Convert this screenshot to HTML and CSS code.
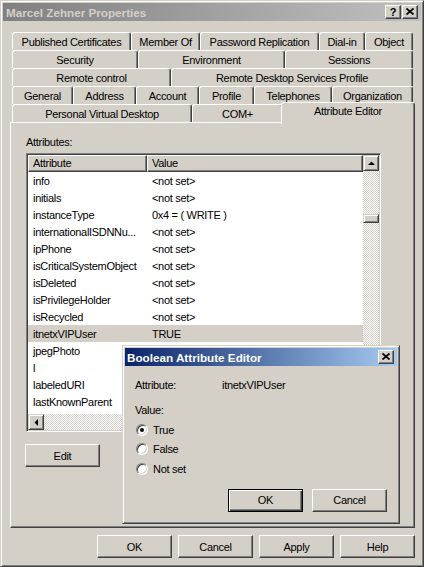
FILE: index.html
```html
<!DOCTYPE html>
<html>
<head>
<meta charset="utf-8">
<link rel="stylesheet" href="styles.css">
</head>
<body>
<div class="window">
  <div class="titlebar">
    <span class="title">Marcel Zehner Properties</span>
    <div class="tbtns">
      <span class="tbtn">?</span>
      <span class="tbtn"><svg width="8" height="7" viewBox="0 0 8 7"><path d="M0.5 0.5L7.5 6.5M7.5 0.5L0.5 6.5" stroke="#000" stroke-width="1.7"/></svg></span>
    </div>
  </div>
  <div class="content">
    <div class="tabs">
      <div class="tabrow r1">
        <div class="tab">Published Certificates</div>
        <div class="tab">Member Of</div>
        <div class="tab">Password Replication</div>
        <div class="tab">Dial-in</div>
        <div class="tab">Object</div>
      </div>
      <div class="tabrow r2">
        <div class="tab">Security</div>
        <div class="tab">Environment</div>
        <div class="tab">Sessions</div>
      </div>
      <div class="tabrow r3">
        <div class="tab">Remote control</div>
        <div class="tab">Remote Desktop Services Profile</div>
      </div>
      <div class="tabrow r4">
        <div class="tab">General</div>
        <div class="tab">Address</div>
        <div class="tab">Account</div>
        <div class="tab">Profile</div>
        <div class="tab">Telephones</div>
        <div class="tab">Organization</div>
      </div>
      <div class="tabrow r5">
        <div class="tab">Personal Virtual Desktop</div>
        <div class="tab">COM+</div>
        <div class="tab sel">Attribute Editor</div>
      </div>
    </div>
    <div class="panel">
      <div class="label">Attributes:</div>
      <div class="listbox">
        <div class="listmain">
          <div class="header">
            <div class="hcell">Attribute</div>
            <div class="hcell">Value</div>
          </div>
          <div class="row"><span>info</span><span>&lt;not set&gt;</span></div>
          <div class="row"><span>initials</span><span>&lt;not set&gt;</span></div>
          <div class="row"><span>instanceType</span><span>0x4 = ( WRITE )</span></div>
          <div class="row"><span>internationalISDNNu...</span><span>&lt;not set&gt;</span></div>
          <div class="row"><span>ipPhone</span><span>&lt;not set&gt;</span></div>
          <div class="row"><span>isCriticalSystemObject</span><span>&lt;not set&gt;</span></div>
          <div class="row"><span>isDeleted</span><span>&lt;not set&gt;</span></div>
          <div class="row"><span>isPrivilegeHolder</span><span>&lt;not set&gt;</span></div>
          <div class="row"><span>isRecycled</span><span>&lt;not set&gt;</span></div>
          <div class="row selected"><span>itnetxVIPUser</span><span>TRUE</span></div>
          <div class="row"><span>jpegPhoto</span><span></span></div>
          <div class="row"><span>l</span><span></span></div>
          <div class="row"><span>labeledURI</span><span></span></div>
          <div class="row"><span>lastKnownParent</span><span></span></div>
          <div class="row"><span>lastLogoff</span><span></span></div>
        </div>
        <div class="vscroll">
          <div class="sbtn"><svg width="7" height="4" viewBox="0 0 7 4"><polygon points="0,4 7,4 3.5,0.5" fill="#000"/></svg></div>
          <div class="thumb"></div>
        </div>
        <div class="hscroll">
          <div class="sbtn"><svg width="4" height="7" viewBox="0 0 4 7"><polygon points="4,0 4,7 0.5,3.5" fill="#000"/></svg></div>
        </div>
        <div class="corner"></div>
      </div>
      <button class="btn edit">Edit</button>
    </div>
    <div class="footer">
      <button class="btn">OK</button>
      <button class="btn">Cancel</button>
      <button class="btn">Apply</button>
      <button class="btn">Help</button>
    </div>
  </div>
</div>

<div class="dialog">
  <div class="dtitle">
    <span class="dtext">Boolean Attribute Editor</span>
    <span class="tbtn"><svg width="8" height="7" viewBox="0 0 8 7"><path d="M0.5 0.5L7.5 6.5M7.5 0.5L0.5 6.5" stroke="#000" stroke-width="1.7"/></svg></span>
  </div>
  <div class="dbody">
    <div class="attrrow"><span class="alabel">Attribute:</span><span>itnetxVIPUser</span></div>
    <div class="vlabel">Value:</div>
    <div class="radios">
      <div class="ropt"><span class="radio on"></span><span>True</span></div>
      <div class="ropt"><span class="radio"></span><span>False</span></div>
      <div class="ropt"><span class="radio"></span><span>Not set</span></div>
    </div>
    <div class="dbtns">
      <button class="btn default">OK</button>
      <button class="btn">Cancel</button>
    </div>
  </div>
</div>
</body>
</html>
```

FILE: styles.css
```css
* { box-sizing: border-box; }
html, body { margin: 0; padding: 0; }
body {
  position: relative;
  width: 424px;
  height: 567px;
  overflow: hidden;
  background: #d4d0c8;
  font-family: "Liberation Sans", Arial, sans-serif;
  font-size: 11px;
  letter-spacing: -0.3px;
  color: #000;
}

.window {
  width: 424px;
  height: 567px;
  background: #d4d0c8;
  border: 1px solid;
  border-color: #d4d0c8 #404040 #404040 #d4d0c8;
  box-shadow: inset 1px 1px #fff, inset -1px -1px #808080;
  padding: 2px;
  display: flex;
  flex-direction: column;
}

.titlebar {
  height: 18px;
  flex: none;
  background: linear-gradient(to right, #808080, #c0c0c0);
  display: flex;
  align-items: center;
  justify-content: space-between;
  padding: 0 3px 0 3px;
}
.title {
  color: #d4d0c8;
  font-weight: bold;
  font-size: 11.7px;
  letter-spacing: 0;
}
.tbtns { display: flex; gap: 1px; }
.tbtn {
  width: 16px;
  height: 14px;
  background: #d4d0c8;
  border: 1px solid;
  border-color: #fff #404040 #404040 #fff;
  box-shadow: inset -1px -1px #808080;
  display: flex;
  align-items: center;
  justify-content: center;
  font-weight: bold;
  font-size: 11px;
  line-height: 12px;
  letter-spacing: 0;
  padding-bottom: 1px;
}

.content {
  flex: 1;
  padding: 11px 6px 0 7px;
  display: flex;
  flex-direction: column;
}

.tabs { margin: 0 2px; }
.tabrow { display: grid; height: 18px; }
.r1 { grid-template-columns: 119px 69px 119px 46px 48px; }
.r2 { grid-template-columns: 126px 147px 128px; }
.r3 { grid-template-columns: 159px 242px; }
.r4 { grid-template-columns: 61px 63px 63px 55px 78px 81px; }
.r5 { grid-template-columns: 180px 91px 130px; }

.tab {
  background: #d4d0c8;
  border: 1px solid;
  border-bottom: none;
  border-color: #fff #404040 transparent #fff;
  box-shadow: inset -1px 0 #808080;
  border-radius: 3px 3px 0 0;
  text-align: center;
  line-height: 18px;
  white-space: nowrap;
  overflow: hidden;
}
.tab.sel {
  position: relative;
  z-index: 2;
  margin: -2px -2px -2px -2px;
  line-height: 17px;
}

.panel {
  height: 406px;
  flex: none;
  border: 1px solid;
  border-color: #fff #404040 #404040 #fff;
  box-shadow: inset -1px -1px #808080;
  padding: 13px 0 0 15px;
}
.label { line-height: 13px; margin-bottom: 4px; }

.listbox {
  width: 355px;
  height: 279px;
  border: 1px solid;
  border-color: #808080 #fff #fff #808080;
  box-shadow: inset 1px 1px #404040, inset -1px -1px #d4d0c8;
  padding: 1px;
  display: grid;
  grid-template-columns: 1fr 16px;
  grid-template-rows: 1fr 16px;
}
.listmain { background: #fff; overflow: hidden; }
.header { display: grid; grid-template-columns: 119px 1fr; height: 17px; }
.hcell {
  background: #d4d0c8;
  border: 1px solid;
  border-color: #fff #404040 #404040 #fff;
  box-shadow: inset -1px -1px #808080;
  padding-left: 4px;
  line-height: 15px;
}
.row {
  display: grid;
  grid-template-columns: 119px 1fr;
  height: 17px;
  line-height: 18px;
  white-space: nowrap;
}
.row span { padding-left: 5px; overflow: hidden; }
.row.selected { background: #d4d0c8; }

.vscroll, .hscroll {
  background-color: #d4d0c8;
  background-image: repeating-conic-gradient(#ffffff 0% 25%, #d4d0c8 0% 50%);
  background-size: 2px 2px;
}
.vscroll { display: flex; flex-direction: column; align-items: stretch; }
.hscroll { display: flex; }
.sbtn {
  width: 16px;
  height: 16px;
  flex: none;
  background: #d4d0c8;
  border: 1px solid;
  border-color: #d4d0c8 #404040 #404040 #d4d0c8;
  box-shadow: inset 1px 1px #fff, inset -1px -1px #808080;
  display: flex;
  align-items: center;
  justify-content: center;
}
.thumb {
  margin-top: 43px;
  height: 9px;
  background: #d4d0c8;
  border: 1px solid;
  border-color: #d4d0c8 #404040 #404040 #d4d0c8;
  box-shadow: inset 1px 1px #fff, inset -1px -1px #808080;
}
.corner { background: #d4d0c8; }

.btn {
  width: 75px;
  height: 23px;
  padding: 0;
  background: #d4d0c8;
  border: 1px solid;
  border-color: #fff #404040 #404040 #fff;
  box-shadow: inset -1px -1px #808080;
  font-family: inherit;
  font-size: 11px;
  letter-spacing: -0.3px;
  color: #000;
  display: flex;
  align-items: center;
  justify-content: center;
}
.edit { margin-top: 12px; margin-left: -1px; }

.footer {
  display: flex;
  justify-content: flex-end;
  gap: 6px;
  margin-top: 7px;
}

.dialog {
  position: absolute;
  left: 122px;
  top: 345px;
  width: 278px;
  height: 179px;
  background: #d4d0c8;
  border: 1px solid;
  border-color: #d4d0c8 #404040 #404040 #d4d0c8;
  box-shadow: inset 1px 1px #fff, inset -1px -1px #808080;
  padding: 2px;
  z-index: 5;
}
.dtitle {
  height: 18px;
  background: linear-gradient(to right, #0a246a, #a6caf0);
  display: flex;
  align-items: center;
  justify-content: space-between;
  padding: 0 3px 0 2px;
}
.dtext {
  color: #fff;
  font-weight: bold;
  font-size: 11.7px;
  letter-spacing: 0;
}
.dbody { padding: 13px 10px 0 10px; }
.attrrow { display: flex; line-height: 13px; }
.alabel { width: 87px; }
.vlabel { line-height: 13px; margin-top: 12px; }
.radios { margin-top: 3px; }
.ropt {
  height: 19.5px;
  display: flex;
  align-items: center;
  gap: 5px;
}
.radio {
  position: relative;
  width: 12px;
  height: 12px;
  margin-left: 1px;
  border-radius: 50%;
  background: #fff;
  border: 1px solid;
  border-color: #808080 #fff #fff #808080;
  box-shadow: inset 1px 1px #404040, inset -1px -1px #d4d0c8;
}
.radio.on::after {
  content: "";
  position: absolute;
  left: 3px;
  top: 3px;
  width: 4px;
  height: 4px;
  border-radius: 50%;
  background: #000;
}
.dbtns {
  display: flex;
  justify-content: flex-end;
  gap: 9px;
  margin-top: 10px;
}
.btn.default {
  border: 1px solid #000;
  box-shadow: inset 1px 1px #fff, inset -1px -1px #404040, inset -2px -2px #808080;
}
```
